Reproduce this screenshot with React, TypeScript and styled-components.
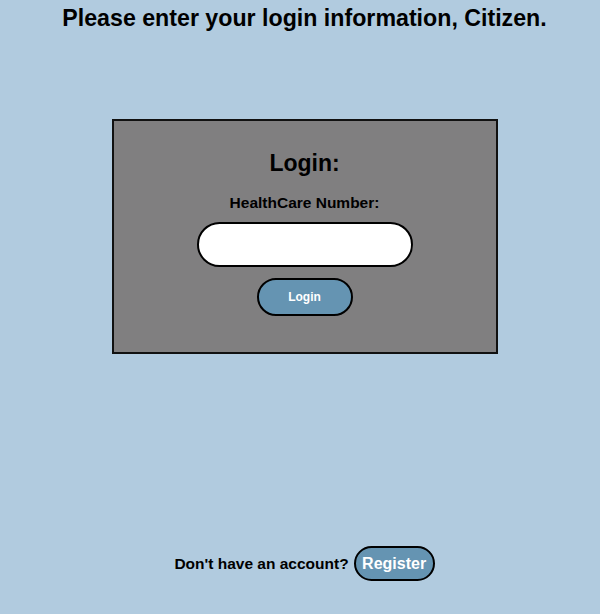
import React, { useState } from "react";
import styled, { createGlobalStyle } from "styled-components";

const GlobalStyle = createGlobalStyle`
  html, body {
    margin: 0;
    padding: 0;
    height: 100%;
    background: #b1cbdf;
    font-family: "Liberation Sans", Arial, sans-serif;
  }
  #root {
    height: 100%;
  }
`;

const Page = styled.div`
  min-height: 100%;
  display: flex;
  flex-direction: column;
  align-items: center;
  box-sizing: border-box;
  padding-left: 9px;
`;

const Title = styled.h1`
  margin: 5px 0 0;
  font-size: 23.2px;
  font-weight: bold;
  color: #000;
  line-height: 26px;
`;

const Card = styled.form`
  margin-top: 88px;
  width: 386px;
  height: 235px;
  box-sizing: border-box;
  background: #807f80;
  border: 2px solid #111;
  display: flex;
  flex-direction: column;
  align-items: center;
  padding-top: 29px;
`;

const CardHeading = styled.h2`
  margin: 0;
  font-size: 23px;
  font-weight: bold;
  line-height: 26px;
  color: #000;
`;

const Label = styled.label`
  margin-top: 18px;
  font-size: 15.5px;
  font-weight: bold;
  line-height: 18px;
  color: #000;
`;

const TextInput = styled.input`
  margin-top: 10px;
  width: 216px;
  height: 45px;
  box-sizing: border-box;
  border: 2px solid #000;
  border-radius: 23px;
  background: #fff;
  padding: 0 16px;
  font-size: 14px;
  font-family: inherit;
  outline: none;
`;

const PillButton = styled.button<{ $w: number; $h: number; $fs: number }>`
  width: ${(p) => p.$w}px;
  height: ${(p) => p.$h}px;
  box-sizing: border-box;
  border: 2px solid #000;
  border-radius: ${(p) => p.$h / 2}px;
  background: #6594b2;
  color: #fff;
  font-family: inherit;
  font-weight: bold;
  font-size: ${(p) => p.$fs}px;
  padding: 0;
  cursor: pointer;
`;

const LoginButton = styled(PillButton)`
  margin-top: 11px;
`;

const Spacer = styled.div`
  flex: 1;
`;

const Footer = styled.div`
  display: flex;
  align-items: center;
  gap: 5px;
  padding-bottom: 33px;
`;

const FooterText = styled.span`
  font-size: 15.5px;
  font-weight: bold;
  color: #000;
`;

export default function App() {
  const [hcn, setHcn] = useState("");

  return (
    <>
      <GlobalStyle />
      <Page>
        <Title>Please enter your login information, Citizen.</Title>
        <Card onSubmit={(e) => e.preventDefault()}>
          <CardHeading>Login:</CardHeading>
          <Label htmlFor="hcn">HealthCare Number:</Label>
          <TextInput id="hcn" value={hcn} onChange={(e) => setHcn(e.target.value)} />
          <LoginButton type="submit" $w={96} $h={38} $fs={12}>
            Login
          </LoginButton>
        </Card>
        <Spacer />
        <Footer>
          <FooterText>Don't have an account?</FooterText>
          <PillButton type="button" $w={81} $h={35} $fs={16}>
            Register
          </PillButton>
        </Footer>
      </Page>
    </>
  );
}
